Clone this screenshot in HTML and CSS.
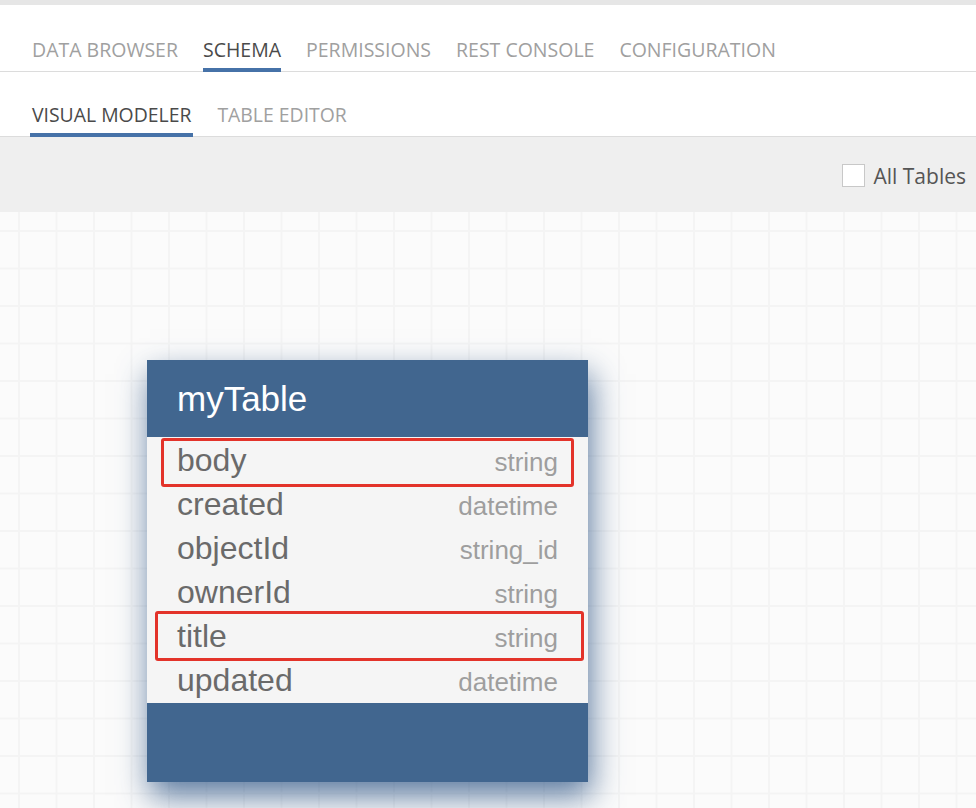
FILE: index.html
```html
<!DOCTYPE html>
<html lang="en">
<head>
<meta charset="utf-8">
<title>Schema - Visual Modeler</title>
<link rel="stylesheet" href="styles.css">
</head>
<body>
<div class="topstrip"></div>
<nav class="nav">
  <a class="tab">DATA BROWSER</a>
  <a class="tab active">SCHEMA</a>
  <a class="tab">PERMISSIONS</a>
  <a class="tab">REST CONSOLE</a>
  <a class="tab">CONFIGURATION</a>
</nav>
<nav class="subnav">
  <a class="subtab active">VISUAL MODELER</a>
  <a class="subtab">TABLE EDITOR</a>
</nav>
<div class="toolbar">
  <label class="all-tables"><span class="checkbox"></span><span class="all-label">All Tables</span></label>
</div>
<main class="canvas">
  <div class="table-card">
    <div class="card-header">myTable</div>
    <ul class="card-fields">
      <li class="field"><span class="fname">body</span><span class="ftype">string</span></li>
      <li class="field"><span class="fname">created</span><span class="ftype">datetime</span></li>
      <li class="field"><span class="fname">objectId</span><span class="ftype">string_id</span></li>
      <li class="field"><span class="fname">ownerId</span><span class="ftype">string</span></li>
      <li class="field"><span class="fname">title</span><span class="ftype">string</span></li>
      <li class="field"><span class="fname">updated</span><span class="ftype">datetime</span></li>
    </ul>
    <div class="card-footer"></div>
    <div class="highlight hl-body"></div>
    <div class="highlight hl-title"></div>
  </div>
</main>
</body>
</html>
```
FILE: styles.css
```css
html, body {
  margin: 0;
  padding: 0;
  height: 100%;
  overflow: hidden;
}
body {
  font-family: "Open Sans", "Liberation Sans", sans-serif;
  background: #fafafa;
  display: flex;
  flex-direction: column;
}
.topstrip {
  height: 5px;
  background: #e6e6e6;
  flex: none;
}
.nav {
  flex: none;
  display: flex;
  align-items: flex-end;
  gap: 25px;
  height: 66px;
  padding-left: 32px;
  background: #fff;
  border-bottom: 1px solid #dcdcdc;
}
.tab {
  font-size: 19.5px;
  line-height: 26px;
  color: #a0a0a0;
  padding-bottom: 5px;
  border-bottom: 4px solid transparent;
  margin-bottom: -1px;
}
.tab.active {
  color: #4a4a4a;
  border-bottom-color: #4672a8;
}
.subnav {
  flex: none;
  display: flex;
  align-items: flex-end;
  gap: 22px;
  height: 64px;
  padding-left: 30px;
  background: #fff;
  border-bottom: 1px solid #dcdcdc;
}
.subtab {
  font-size: 19.4px;
  line-height: 26px;
  color: #a0a0a0;
  padding: 0 2px 5px;
  border-bottom: 4px solid transparent;
  margin-bottom: -1px;
}
.subtab.active {
  color: #4a4a4a;
  border-bottom-color: #4672a8;
}
.toolbar {
  flex: none;
  height: 75px;
  background: #efefef;
  display: flex;
  align-items: center;
  justify-content: flex-end;
  padding-right: 10px;
}
.all-tables {
  display: flex;
  align-items: center;
  gap: 8px;
  padding-top: 2px;
}
.checkbox {
  width: 21px;
  height: 21px;
  border: 1px solid #c8c8c8;
  background: #fff;
  box-sizing: content-box;
}
.all-label {
  font-size: 21px;
  color: #555;
}
.canvas {
  flex: 1;
  position: relative;
  background-color: #fbfbfb;
  background-image:
    linear-gradient(to right, #f4f4f4 2px, transparent 2px),
    linear-gradient(to bottom, #f4f4f4 2px, transparent 2px);
  background-size: 37.5px 37.5px;
  background-position: 18px 18px;
}
.table-card {
  position: absolute;
  left: 147px;
  top: 148px;
  width: 441px;
  font-family: "Liberation Sans", Arial, sans-serif;
  box-shadow: 3px 14px 30px rgba(40, 80, 130, 0.75);
}
.card-header {
  height: 77px;
  background: #41668f;
  color: #fff;
  font-size: 35px;
  line-height: 77px;
  padding-left: 30px;
}
.card-fields {
  list-style: none;
  margin: 0;
  padding: 1px 30px 1px;
  background: #f5f5f5;
}
.field {
  display: flex;
  justify-content: space-between;
  align-items: baseline;
  height: 44px;
  line-height: 44px;
}
.fname {
  font-size: 32px;
  color: #6a6a6a;
}
.ftype {
  font-size: 26px;
  color: #9e9e9e;
}
.card-footer {
  height: 79px;
  background: #41668f;
}
.highlight {
  position: absolute;
  border: 3px solid #e3332a;
  border-radius: 3px;
  box-sizing: border-box;
}
.hl-body {
  left: 14px;
  top: 78px;
  width: 413px;
  height: 49px;
}
.hl-title {
  left: 8px;
  top: 251px;
  width: 429px;
  height: 50px;
}
```
